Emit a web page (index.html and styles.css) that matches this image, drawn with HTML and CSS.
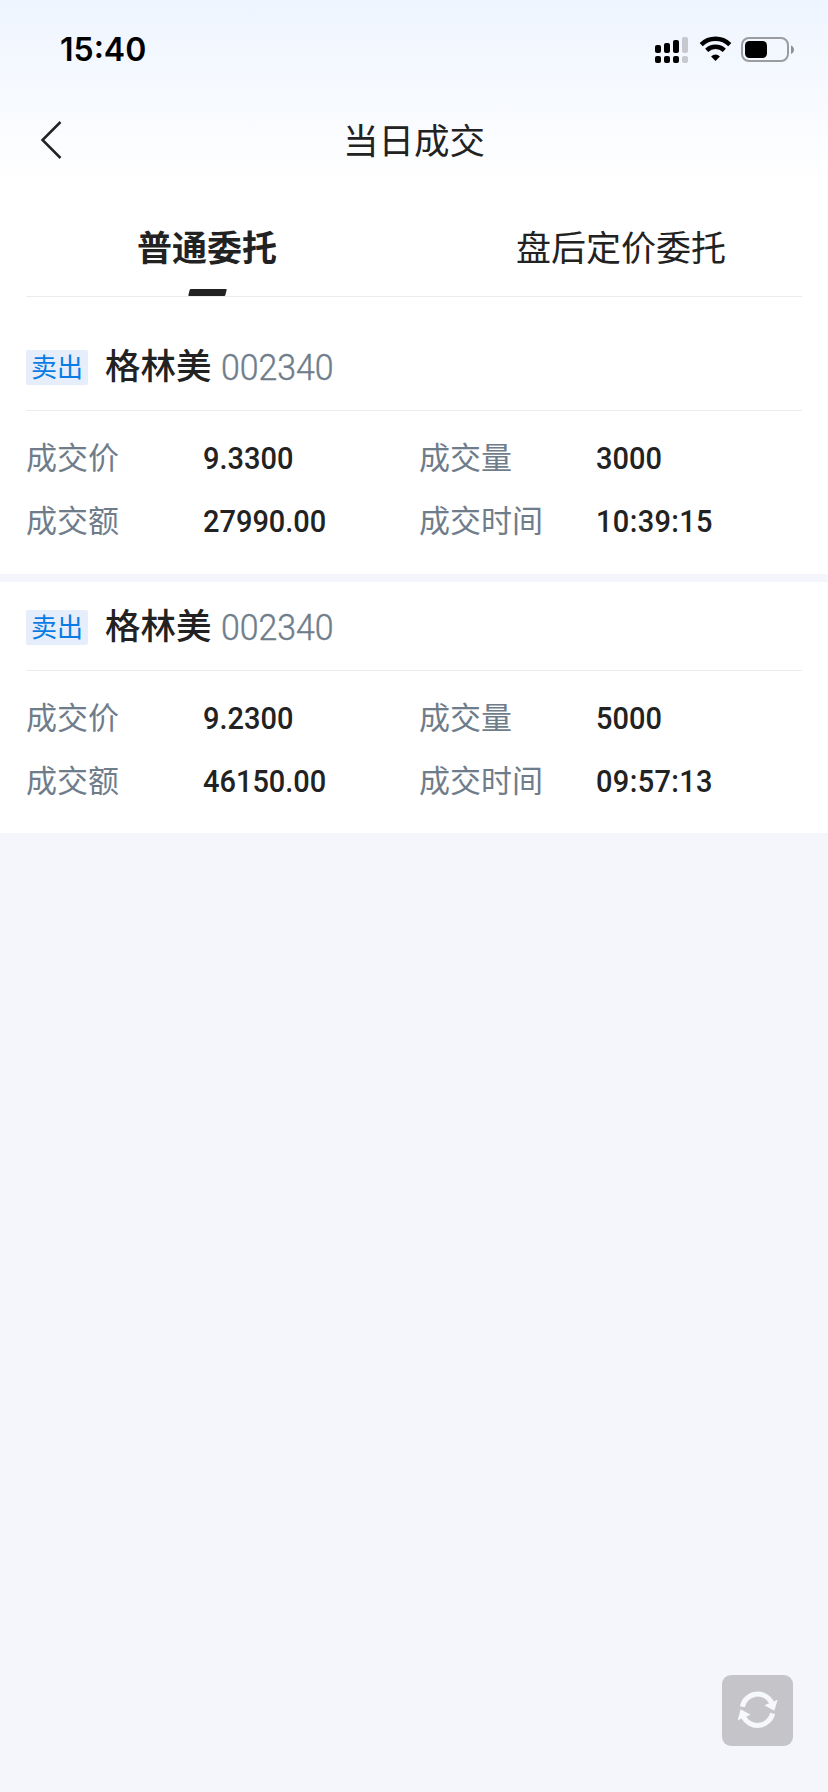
FILE: index.html
```html
<!DOCTYPE html>
<html lang="zh-CN">
<head>
<meta charset="utf-8">
<title>当日成交</title>
<link rel="stylesheet" href="styles.css">
</head>
<body>
<div class="screen">
  <header class="top">
    <div class="status">
      <span class="clock">15:40</span>
      <svg class="status-icons" width="140" height="28" viewBox="0 0 140 28">
        <g fill="#000">
          <rect x="0" y="9" width="6" height="8" rx="2"/>
          <rect x="9" y="7" width="6" height="10" rx="2"/>
          <rect x="18" y="4" width="6" height="13" rx="2"/>
          <rect x="0" y="20" width="6" height="7" rx="2"/>
          <rect x="9" y="20" width="6" height="7" rx="2"/>
          <rect x="18" y="20" width="6" height="7" rx="2"/>
        </g>
        <g fill="#c6c9cf">
          <rect x="27" y="1" width="6" height="16" rx="2"/>
          <rect x="27" y="20" width="6" height="7" rx="2"/>
        </g>
        <g fill="none" stroke="#000" stroke-width="4.4">
          <path d="M46.2 8.6a20.5 20.5 0 0 1 28.6 0"/>
          <path d="M51.7 14.4a12.6 12.6 0 0 1 17.6 0"/>
        </g>
        <path d="M56.1 20.4a6.3 6.3 0 0 1 8.800 0l-4.400 4.600z" fill="#000"/>
        <rect x="87" y="2" width="46" height="23" rx="7" fill="none" stroke="#9a9ca0" stroke-width="2"/>
        <rect x="90" y="5" width="22" height="17" rx="4.5" fill="#000"/>
        <path d="M136 9.500c4 1.500 4 7 0 8.500z" fill="#8e9094"/>
      </svg>
    </div>
    <div class="nav">
      <svg class="back" width="24" height="40" viewBox="0 0 24 40" fill="none" stroke="#222" stroke-width="2.500"><path d="M21.500 2 3.500 20l18 18"/></svg>
      <h1 class="title">当日成交</h1>
    </div>
  </header>
  <nav class="tabs">
    <div class="tab tab-active">普通委托</div>
    <div class="tab">盘后定价委托</div>
  </nav>
  <main class="list">
    <section class="card">
      <div class="card-head"><span class="tag">卖出</span><span class="name">格林美</span><span class="code">002340</span></div>
      <div class="grid">
        <span class="label">成交价</span><span class="value">9.3300</span><span class="label">成交量</span><span class="value">3000</span>
        <span class="label">成交额</span><span class="value">27990.00</span><span class="label">成交时间</span><span class="value time">10:39:15</span>
      </div>
    </section>
    <section class="card card-last">
      <div class="card-head"><span class="tag">卖出</span><span class="name">格林美</span><span class="code">002340</span></div>
      <div class="grid">
        <span class="label">成交价</span><span class="value">9.2300</span><span class="label">成交量</span><span class="value">5000</span>
        <span class="label">成交额</span><span class="value">46150.00</span><span class="label">成交时间</span><span class="value time">09:57:13</span>
      </div>
    </section>
  </main>
  <div class="refresh">
    <svg width="71" height="71" viewBox="0 0 213 213" fill="none" stroke="#f7f8fb" stroke-width="15">
      <path d="M61 95A47 47 0 0 1 149 83"/>
      <path d="M152 115A47 47 0 0 1 64 125"/>
      <path d="M167 74 157 107 127 91zM56 103 47 136 86 119z" fill="#f7f8fb" stroke="none"/>
    </svg>
  </div>
</div>
</body>
</html>
```
FILE: styles.css
```css
* { box-sizing: border-box; }
body {
  margin: 0;
  background: #f4f6fb;
  color: #222;
  font-family: "Noto Sans CJK SC", sans-serif;
}
.screen { position: relative; width: 828px; height: 1792px; overflow: hidden; }
.top { height: 186px; background: linear-gradient(#eef5ff, #f6f9ff 45%, #fff); }
.status {
  height: 100px;
  padding: 0 33px 0 60px;
  display: flex;
  align-items: center;
  justify-content: space-between;
}
.clock { font: 600 32px/40px Inter, sans-serif; color: #000; }
.nav { height: 80px; display: grid; grid-template-columns: 100px 1fr 100px; align-items: center; }
.back { margin-left: 39px; }
.title { margin: 0 0 3px; text-align: center; font-size: 35.500px; line-height: 50px; font-weight: 400; }
.tabs {
  height: 136px;
  background: linear-gradient(#ececee, #ececee) 26px 110px / 776px 1px no-repeat #fff;
  display: grid;
  grid-template-columns: 1fr 1fr;
}
.tab { height: 110px; font-size: 35px; line-height: 120px; text-align: center; position: relative; }
.tab-active { font-weight: 700; }
.tab-active::after {
  content: "";
  position: absolute;
  left: 189px;
  bottom: 0;
  width: 37px;
  height: 7px;
  border-radius: 1px;
  background: #222;
  transform: skewX(-14deg);
}
.card { height: 252px; padding: 0 26px; background: #fff; margin-bottom: 8px; }
.card-last { height: 251px; }
.card-head { height: 89px; border-bottom: 1px solid #ececee; display: flex; align-items: center; }
.tag {
  width: 62px;
  height: 35px;
  margin-top: 2px;
  border-radius: 2px;
  background: #e5eefa;
  color: #0a7be4;
  font-size: 26px;
  line-height: 31px;
  text-align: center;
}
.name { margin: 0 0 4px 17px; font-size: 35.500px; line-height: 50px; font-weight: 500; }
.code {
  margin: 4px 0 0 9px;
  font: 300 36px/48px Roboto, sans-serif;
  color: #6f7d8b;
  -webkit-text-stroke: .4px #6f7d8b;
  transform: scaleX(.94);
  transform-origin: 0 50%;
}
.grid {
  padding-top: 16px;
  display: grid;
  grid-template-columns: 177px 216px 177px 1fr;
  grid-auto-rows: 63px;
  align-items: center;
}
.label { margin-bottom: 6px; font-size: 31px; line-height: 46px; color: #6f7d8b; }
.value {
  justify-self: start;
  margin-bottom: 2px;
  font: 500 32px/46px Roboto, sans-serif;
  transform: scaleX(.905);
  transform-origin: 0 50%;
}
.time { letter-spacing: .4px; }
.refresh {
  position: absolute;
  left: 722px;
  top: 1675px;
  width: 71px;
  height: 71px;
  border-radius: 9px;
  background: #c5c4c9;
}
.refresh svg { display: block; }
```
